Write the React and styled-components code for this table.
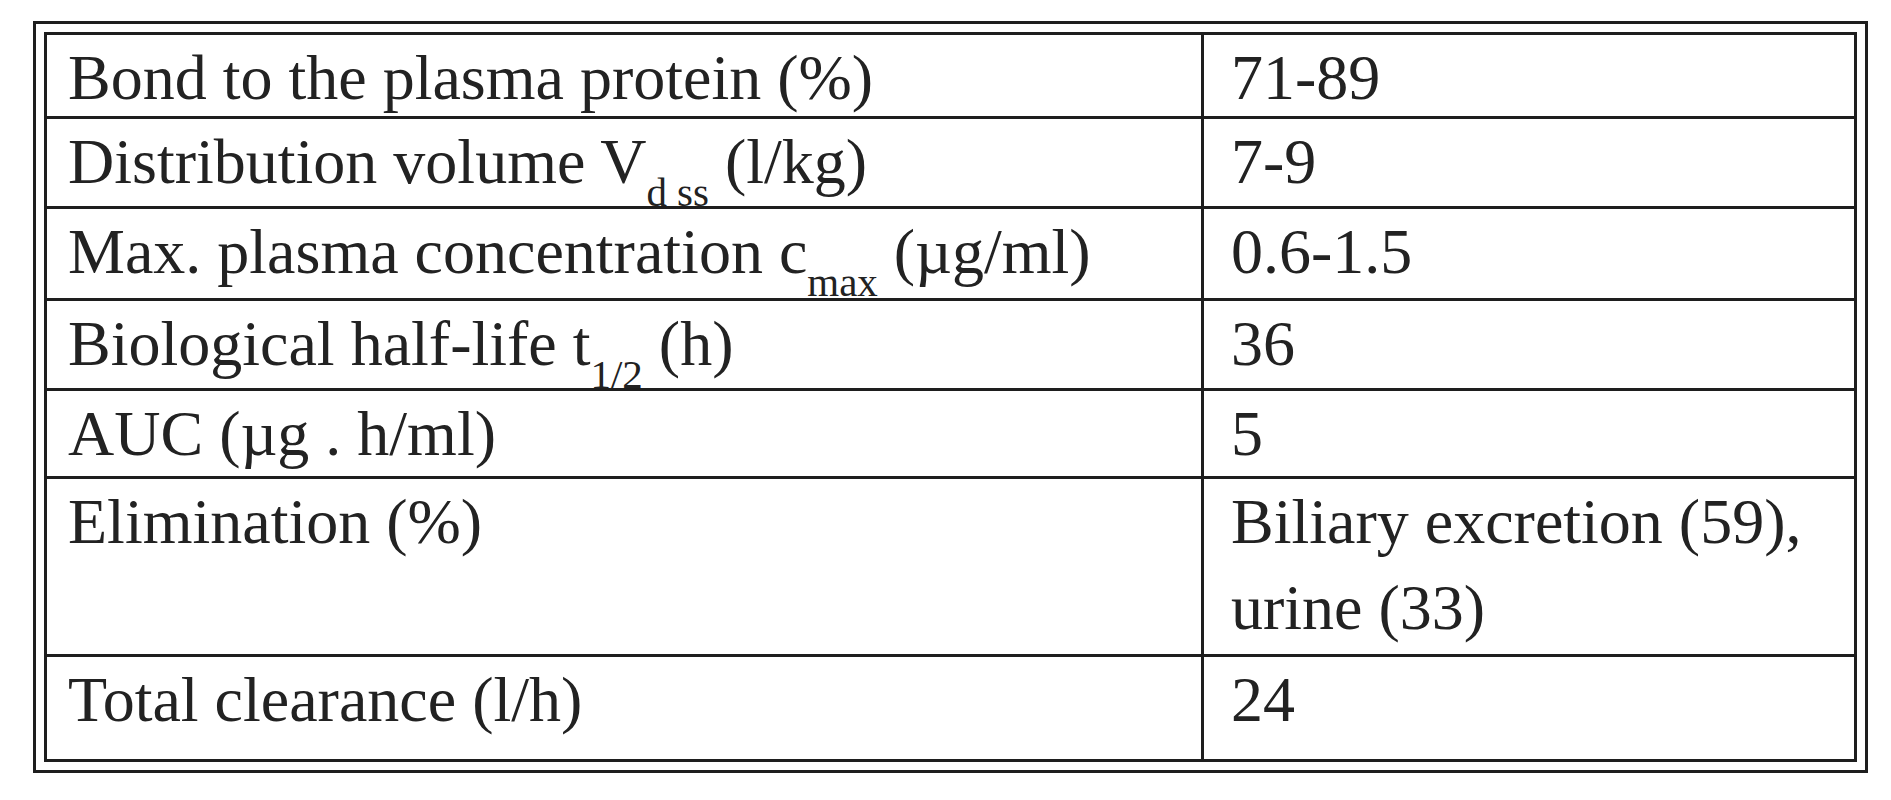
import React from 'react';
import styled, { createGlobalStyle } from 'styled-components';

const GlobalStyle = createGlobalStyle`
  html, body {
    margin: 0;
    padding: 0;
    background: #ffffff;
  }
  body {
    font-family: "Liberation Serif", "Times New Roman", serif;
    color: #222;
  }
`

const Frame = styled.div`
  margin: 21px 0 0 33px;
  width: fit-content;
  border: 3px solid #1e1e1e;
  padding: 8px;
`

const Sheet = styled.div`
  border: 3px solid #1e1e1e;
  display: flex;
  flex-direction: column;
`

const Row = styled.div`
  display: grid;
  grid-template-columns: 1154px 653px;
  box-sizing: border-box;
  height: ${p => p.h}px;
  border-top: ${p => (p.first ? 'none' : '3px solid #1e1e1e')};
`

const Label = styled.div`
  box-sizing: border-box;
  padding-left: 21px;
  font-size: 64px;
  line-height: 86px;
  white-space: nowrap;
`

const Value = styled.div`
  box-sizing: border-box;
  border-left: 3px solid #1e1e1e;
  padding-left: 27px;
  padding-right: 10px;
  font-size: 64px;
  line-height: 86px;
`

// subscripts sit well below the baseline in the original
const Sub = styled.sub`
  font-size: 0.64em;
  line-height: 0;
  vertical-align: -0.55em;
`

const rows = [
  { h: 81, label: <>Bond to the plasma protein (%)</>, value: '71-89' },
  { h: 90, label: <>Distribution volume V<Sub>d ss</Sub> (l/kg)</>, value: '7-9' },
  { h: 92, label: <>Max. plasma concentration c<Sub>max</Sub> (µg/ml)</>, value: '0.6-1.5' },
  { h: 90, label: <>Biological half-life t<Sub>1/2</Sub> (h)</>, value: '36' },
  { h: 88, label: <>AUC (µg . h/ml)</>, value: '5' },
  { h: 178, label: <>Elimination (%)</>, value: 'Biliary excretion (59), urine (33)' },
  { h: 105, label: <>Total clearance (l/h)</>, value: '24' },
]

function App() {
  return (
    <>
      <GlobalStyle />
      <Frame>
        <Sheet>
          {rows.map((r, i) => (
            <Row key={i} h={r.h} first={i === 0}>
              <Label>{r.label}</Label>
              <Value>{r.value}</Value>
            </Row>
          ))}
        </Sheet>
      </Frame>
    </>
  );
}

export default App;
